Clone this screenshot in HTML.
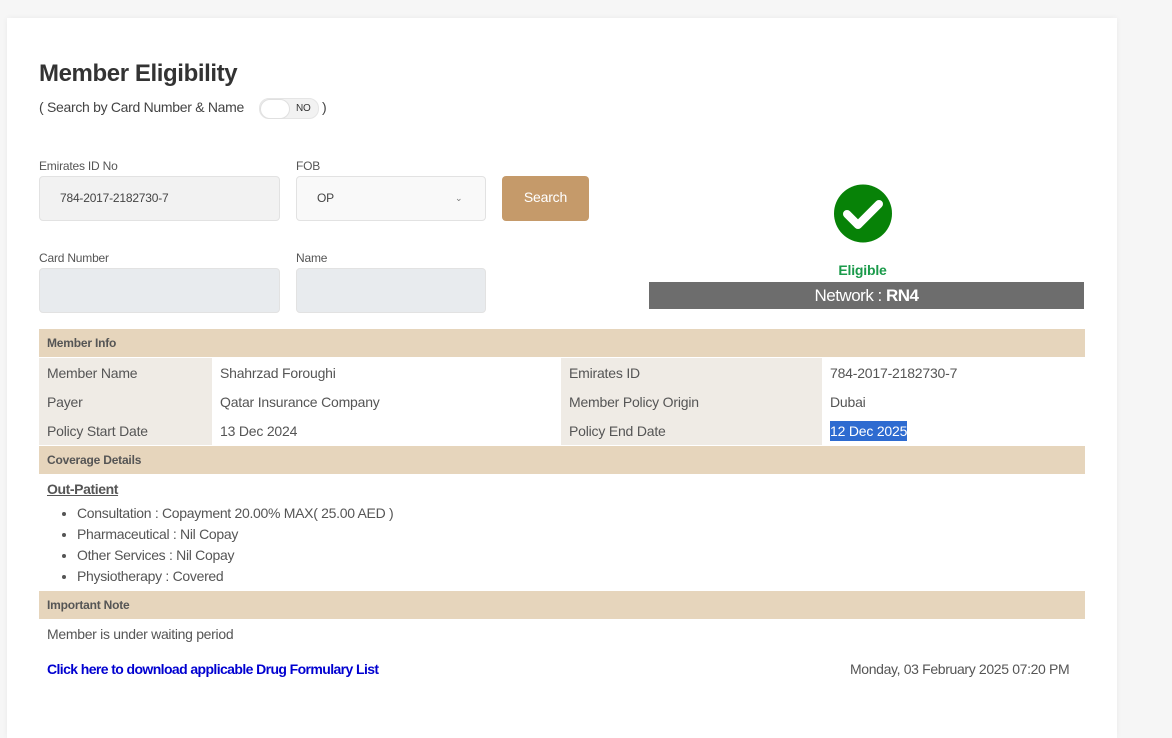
<!DOCTYPE html>
<html><head><style>
body{margin:0;width:1172px;height:713px;background:#f6f6f6;font-family:"Liberation Sans",sans-serif;position:relative;overflow:hidden;color:#555;letter-spacing:-0.2px}
.card{position:absolute;left:7px;top:18px;width:1110px;height:720px;background:#fff;box-shadow:0 0 6px rgba(0,0,0,.05)}
.a{position:absolute}
.lbl{font-size:12px;color:#555}
.inp{position:absolute;border:1px solid #e2e2e2;border-radius:4px;box-sizing:border-box;font-size:12px;color:#444;line-height:43px;padding-left:20px}
.hdr{position:absolute;left:39px;width:1046px;height:28px;background:#e6d5bc;font-size:12px;font-weight:bold;color:#555;line-height:28px;padding-left:8px;box-sizing:border-box}
.c{position:absolute;font-size:14px;color:#555;height:29px;line-height:30px;box-sizing:border-box;padding-left:8px}
.l{background:#efebe5}
li{font-size:14px;line-height:21px;color:#555}
</style></head><body>
<div class="card"></div>
<div class="a" style="left:39px;top:60px;font-size:24px;font-weight:bold;color:#333;letter-spacing:-0.4px">Member Eligibility</div>
<div class="a" style="left:39px;top:99px;font-size:14px;color:#444;letter-spacing:-0.3px">( Search by Card Number &amp; Name</div>
<div class="a" style="left:259px;top:98px;width:58px;height:19px;background:#f2f2f2;border-radius:10px;border:1px solid #e5e5e5"></div>
<div class="a" style="left:260px;top:99px;width:28px;height:18px;background:#fff;border-radius:10px;border:1px solid #e0e0e0"></div>
<div class="a" style="left:296px;top:103px;font-size:10px;color:#333">NO</div>
<div class="a" style="left:322px;top:99px;font-size:14px;color:#444">)</div>
<div class="a lbl" style="left:39px;top:159px">Emirates ID No</div>
<div class="a lbl" style="left:296px;top:159px">FOB</div>
<div class="inp" style="left:39px;top:176px;width:241px;height:45px;background:#f2f2f2">784-2017-2182730-7</div>
<div class="inp" style="left:296px;top:176px;width:190px;height:45px;background:#f9f9f9">OP<span style="position:absolute;left:158px;font-size:9px;color:#777">&#8964;</span></div>
<div class="a" style="left:502px;top:176px;width:87px;height:45px;background:#c59a6a;border-radius:4px;color:#fff;font-size:14px;text-align:center;line-height:43px">Search</div>
<div class="a lbl" style="left:39px;top:251px">Card Number</div>
<div class="a lbl" style="left:296px;top:251px">Name</div>
<div class="inp" style="left:39px;top:268px;width:241px;height:45px;background:#e8ebee"></div>
<div class="inp" style="left:296px;top:268px;width:190px;height:45px;background:#e8ebee"></div>
<svg class="a" style="left:833px;top:184px" width="60" height="59" viewBox="0 0 60 59"><ellipse cx="30" cy="29.5" rx="29" ry="29" fill="#078207"/><path d="M14 30 L25 41 L46 20" stroke="#fff" stroke-width="8" fill="none" stroke-linecap="round" stroke-linejoin="round"/></svg>
<div class="a" style="left:645px;width:435px;top:262px;text-align:center;font-size:14px;font-weight:bold;color:#1a9a4a">Eligible</div>
<div class="a" style="left:649px;top:282px;width:435px;height:27px;background:#6d6d6d;color:#fff;text-align:center;font-size:17px;line-height:27px;letter-spacing:-0.5px">Network : <b>RN4</b></div>
<div class="hdr" style="top:329px">Member Info</div>
<div class="c l" style="left:39px;top:358px;width:173px">Member Name</div>
<div class="c" style="left:212px;top:358px">Shahrzad Foroughi</div>
<div class="c l" style="left:561px;top:358px;width:261px">Emirates ID</div>
<div class="c" style="left:822px;top:358px">784-2017-2182730-7</div>
<div class="c l" style="left:39px;top:387px;width:173px">Payer</div>
<div class="c" style="left:212px;top:387px">Qatar Insurance Company</div>
<div class="c l" style="left:561px;top:387px;width:261px">Member Policy Origin</div>
<div class="c" style="left:822px;top:387px">Dubai</div>
<div class="c l" style="left:39px;top:416px;width:173px">Policy Start Date</div>
<div class="c" style="left:212px;top:416px">13 Dec 2024</div>
<div class="c l" style="left:561px;top:416px;width:261px">Policy End Date</div>
<div class="c" style="left:822px;top:416px"><span style="background:#2e6bd0;color:#fff;padding:2px 0">12 Dec 2025</span></div>
<div class="hdr" style="top:446px">Coverage Details</div>
<div class="a" style="left:47px;top:481px;font-size:14px;font-weight:bold;text-decoration:underline;color:#555;letter-spacing:-0.4px">Out-Patient</div>
<ul class="a" style="left:37px;top:493px;margin:10px 0;padding-left:40px;letter-spacing:-0.3px">
<li>Consultation : Copayment 20.00% MAX( 25.00 AED )</li>
<li>Pharmaceutical : Nil Copay</li>
<li>Other Services : Nil Copay</li>
<li>Physiotherapy : Covered</li></ul>
<div class="a" style="left:47px;top:626px;font-size:14px;letter-spacing:-0.3px">Member is under waiting period</div>
<div class="hdr" style="top:591px">Important Note</div>
<div class="a" style="left:47px;top:661px;font-size:14px;font-weight:bold;color:#0000d0;letter-spacing:-0.6px">Click here to download applicable Drug Formulary List</div>
<div class="a" style="left:850px;top:661px;font-size:14px;color:#555;letter-spacing:-0.35px">Monday, 03 February 2025 07:20 PM</div>
</body></html>
